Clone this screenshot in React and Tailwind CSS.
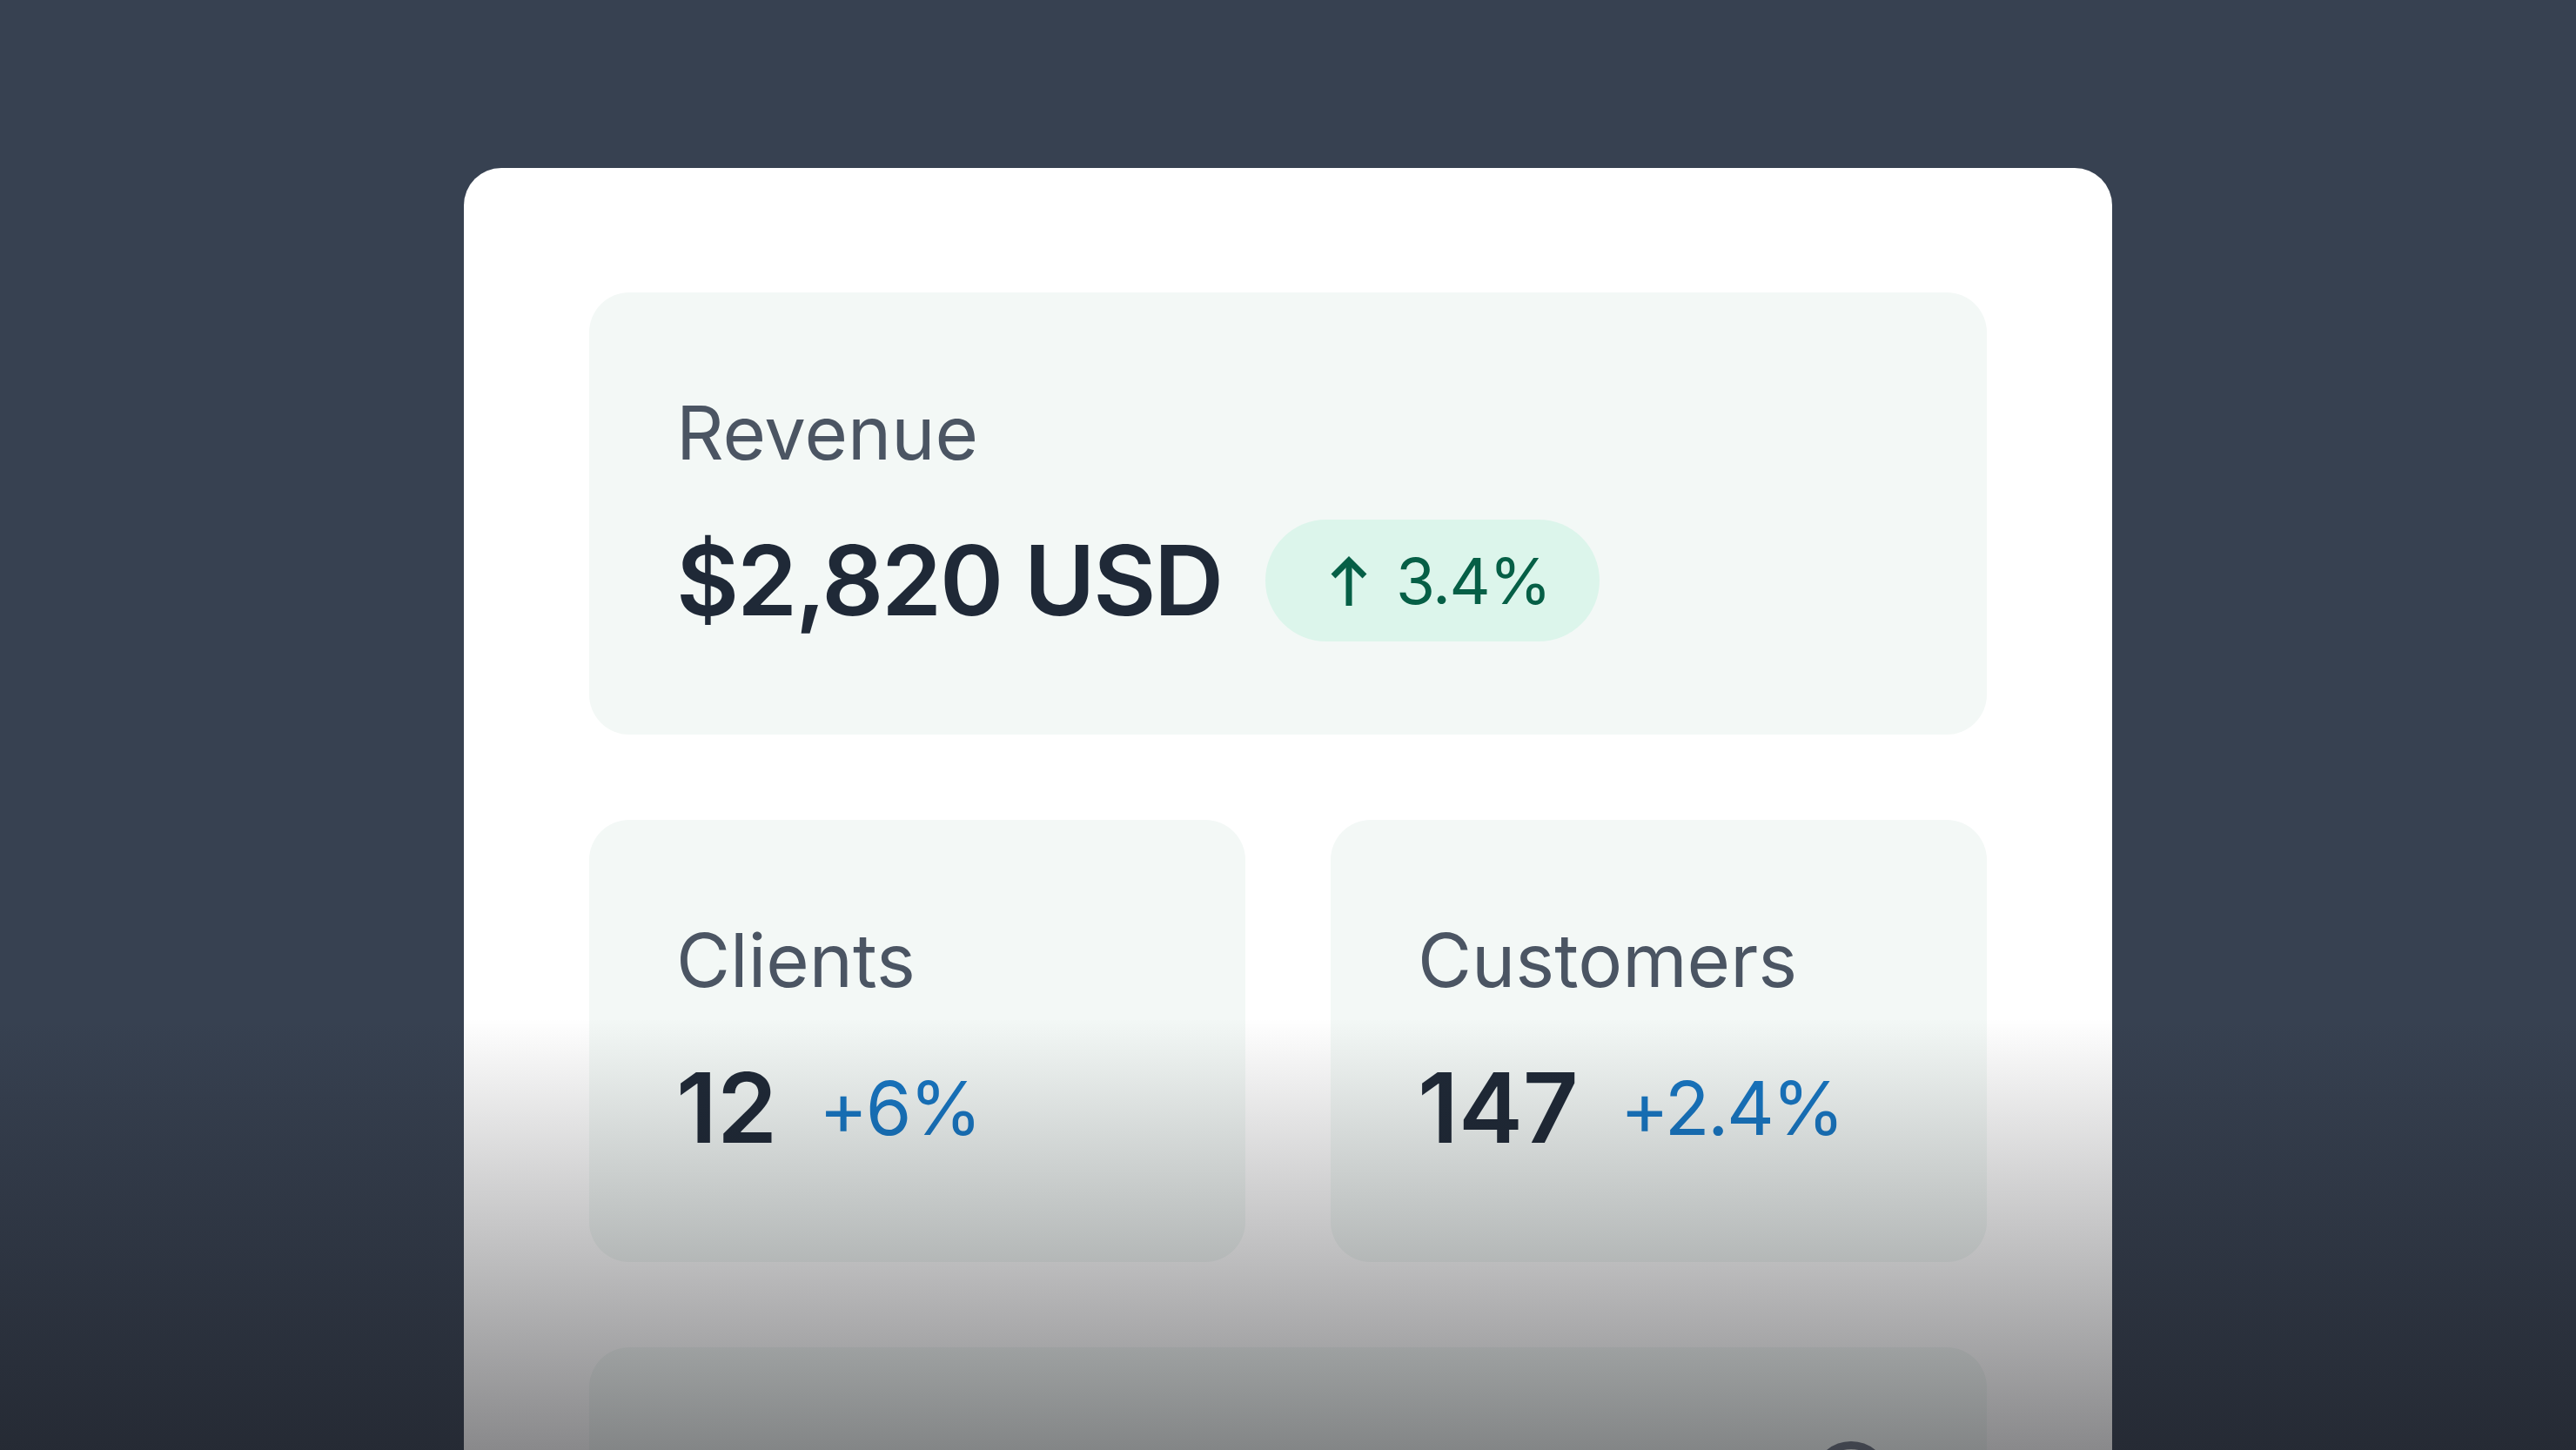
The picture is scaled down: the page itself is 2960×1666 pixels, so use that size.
import React from 'react';

const font = { fontFamily: 'Inter, "Noto Sans", sans-serif' };

function ArrowUp() {
  return (
    <svg width="42" height="58" viewBox="0 0 42 58" fill="none" stroke="currentColor" strokeWidth="7">
      <path d="M21 58V6" />
      <path d="M3 24L21 6L39 24" />
    </svg>
  );
}

function Stat({ label, value, change }) {
  return (
    <div className="rounded-[46px] bg-[#f3f8f6] p-[100px]">
      <p className="text-[85px] leading-[124px] text-[#4b5563]">{label}</p>
      <div className="mt-[30px] flex items-center gap-[48px]">
        <span className="text-[111px] leading-[154px] font-semibold text-[#1f2937]">{value}</span>
        <span className="text-[85px] leading-none tracking-[-0.03em] text-[#1777c4]">{change}</span>
      </div>
    </div>
  );
}

export default function App() {
  return (
    <div className="relative h-[1666px] w-full overflow-hidden bg-[#374151]" style={font}>
      <div className="mx-auto mt-[193px] w-[1894px] rounded-t-[43px] bg-white px-[144px] pt-[143px] pb-[200px]">
        <div className="grid grid-cols-2 gap-[98px]">
          {/* Revenue */}
          <div className="col-span-2 rounded-[46px] bg-[#f3f8f6] p-[100px]">
            <p className="text-[85px] leading-[124px] text-[#4b5563]">Revenue</p>
            <div className="mt-[30px] flex items-center gap-[50px]">
              <span className="text-[111px] leading-[154px] font-semibold tracking-[-0.02em] text-[#1f2937]">$2,820 USD</span>
              <span className="flex h-[140px] w-[384px] items-center gap-[33px] rounded-full bg-[#dcf5eb] pl-[75px] text-[#065f46]">
                <ArrowUp />
                <span className="text-[73px] leading-none tracking-[-0.02em]">3.4%</span>
              </span>
            </div>
          </div>

          <Stat label="Clients" value="12" change="+6%" />
          <Stat label="Customers" value="147" change="+2.4%" />

          {/* next card, mostly below the fold */}
          <div className="col-span-2 h-[506px] rounded-[46px] bg-[#f3f8f6] px-[100px] pt-[108px]">
            <div className="flex justify-end">
              <svg width="88" height="88" viewBox="0 0 88 88" className="mr-[12px]">
                <circle cx="44" cy="44" r="39.5" fill="none" stroke="#6b7280" strokeWidth="9" />
              </svg>
            </div>
          </div>
        </div>
      </div>

      {/* bottom fade */}
      <div className="pointer-events-none absolute inset-x-0 bottom-0 h-[496px] bg-[linear-gradient(to_bottom,rgba(20,20,24,0)_0%,rgba(20,20,24,0.5)_100%)]" />
    </div>
  );
}
